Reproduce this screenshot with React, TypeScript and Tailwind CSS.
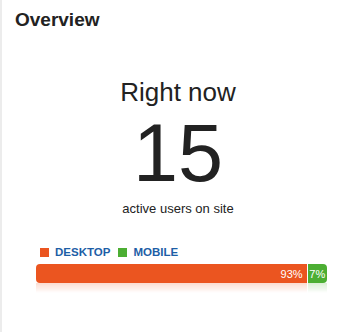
import React from 'react';

const segments = [
  { label: 'DESKTOP', pct: 93, color: 'bg-[#eb5520]' },
  { label: 'MOBILE', pct: 7, color: 'bg-[#4cae33]' },
];

export default function App() {
  return (
    <div className="w-[354px] h-[332px] bg-white border-l-2 border-[#ececec] font-['Liberation_Sans',Arial,sans-serif] text-[#222]">
      <div className="pl-[13px] pt-[8px] text-[19px] font-bold leading-[24px]">Overview</div>

      <div className="flex flex-col items-center mt-[45px]">
        <div className="text-[26px] leading-[30px]">Right now</div>
        <div className="text-[81px] leading-[82px] mt-[5px]">15</div>
        <div className="text-[13px] leading-[16px] mt-[7px]">active users on site</div>
      </div>

      <div className="pl-[34px] pr-[27px] mt-[27px]">
        <div className="flex items-center gap-[8px] pl-[4px] text-[11.5px] font-bold text-[#1d5ea6]">
          {segments.map(s => (
            <div key={s.label} className="flex items-center gap-[6px]">
              <span className={`w-[9px] h-[9px] ${s.color}`} />
              <span>{s.label}</span>
            </div>
          ))}
        </div>
        <div className="mt-[3px] flex h-[19px] rounded-[4px] overflow-hidden text-[11px] text-white">
          <div className="bg-[#eb5520] flex items-center justify-end pr-[4px]" style={{ width: '93%' }}>93%</div>
          <div className="bg-[#4cae33] flex items-center justify-center border-l border-white" style={{ width: '7%' }}>7%</div>
        </div>
        <div className="flex h-[10px] opacity-20 [mask-image:linear-gradient(to_bottom,black,transparent)]">
          <div className="bg-[#eb5520]" style={{ width: '93%' }} />
          <div className="bg-[#4cae33] border-l border-white" style={{ width: '7%' }} />
        </div>
      </div>
    </div>
  );
}
